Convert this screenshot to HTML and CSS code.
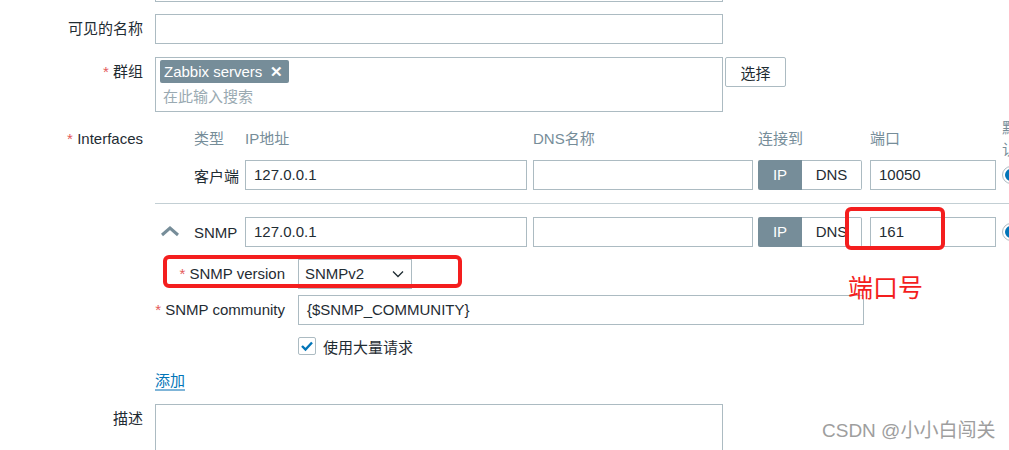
FILE: index.html
```html
<!DOCTYPE html>
<html lang="zh-CN">
<head>
<meta charset="utf-8">
<title>Host</title>
<link rel="stylesheet" href="styles.css">
</head>
<body>
<div class="form">
  <div class="row row-first">
    <div class="lbl"></div>
    <div class="field"><div class="input w-main"></div></div>
  </div>
  <div class="row row-name">
    <div class="lbl">可见的名称</div>
    <div class="field"><div class="input w-main"></div></div>
  </div>
  <div class="row row-group">
    <div class="lbl req">群组</div>
    <div class="field group-field">
      <div class="multiselect w-main">
        <span class="tag">Zabbix servers <span class="tag-x">✕</span></span>
        <div class="placeholder">在此输入搜索</div>
      </div>
      <button class="btn">选择</button>
    </div>
  </div>
  <div class="row row-ifaces">
    <div class="lbl req">Interfaces</div>
    <div class="field">
      <div class="iface-table">
        <div class="hd"></div>
        <div class="hd">类型</div>
        <div class="hd">IP地址</div>
        <div class="hd">DNS名称</div>
        <div class="hd">连接到</div>
        <div class="hd">端口</div>
        <div class="hd hd-default">默认</div>

        <div class="cell r1"></div>
        <div class="cell r1 type">客户端</div>
        <div class="cell r1"><div class="input w-ip">127.0.0.1</div></div>
        <div class="cell r1"><div class="input w-dns"></div></div>
        <div class="cell r1"><div class="toggle"><span class="t-on">IP</span><span class="t-off">DNS</span></div></div>
        <div class="cell r1"><div class="input w-port">10050</div></div>
        <div class="cell r1"><span class="radio"><span class="radio-dot"></span></span></div>

        <div class="sep"></div>

        <div class="cell r2"><svg class="chev" width="20" height="12" viewBox="0 0 20 12"><polyline points="2,10 10,3 18,10" fill="none" stroke="#768d99" stroke-width="3"/></svg></div>
        <div class="cell r2 type">SNMP</div>
        <div class="cell r2"><div class="input w-ip">127.0.0.1</div></div>
        <div class="cell r2"><div class="input w-dns"></div></div>
        <div class="cell r2"><div class="toggle"><span class="t-on">IP</span><span class="t-off">DNS</span></div></div>
        <div class="cell r2"><div class="input w-port">161</div></div>
        <div class="cell r2"><span class="radio"><span class="radio-dot"></span></span></div>

        <div class="details">
          <div class="d-row d-version">
            <div class="lbl req">SNMP version</div>
            <div class="select">SNMPv2<svg class="sel-arrow" width="12" height="8" viewBox="0 0 12 8"><polyline points="1,1.5 6,6.5 11,1.5" fill="none" stroke="#1f2c33" stroke-width="1.3"/></svg></div>
          </div>
          <div class="d-row d-community">
            <div class="lbl req">SNMP community</div>
            <div class="input w-comm">{$SNMP_COMMUNITY}</div>
          </div>
          <div class="d-row d-bulk">
            <div class="lbl"></div>
            <label class="check"><span class="box"><svg width="14" height="12" viewBox="0 0 14 12"><polyline points="2,6 5.5,9.5 12,2.5" fill="none" stroke="#0275b8" stroke-width="2.4"/></svg></span>使用大量请求</label>
          </div>
        </div>
      </div>
      <a class="add">添加</a>
    </div>
  </div>
  <div class="row row-desc">
    <div class="lbl">描述</div>
    <div class="field"><div class="textarea w-main"></div></div>
  </div>
</div>

<div class="mark mark-port"></div>
<div class="mark mark-version"></div>
<div class="note">端口号</div>
<div class="watermark">CSDN @小小白闯关</div>
</body>
</html>
```

FILE: styles.css
```css
html, body {
  margin: 0;
  padding: 0;
  overflow: hidden;
  background: #ffffff;
}
body {
  width: 1009px;
  height: 450px;
  position: relative;
  font-family: "Liberation Sans", Arial, "Noto Sans CJK SC", sans-serif;
  font-size: 15px;
  color: #1f2c33;
}
.form {
  display: flex;
  flex-direction: column;
}
.row {
  display: grid;
  grid-template-columns: 143px auto;
  column-gap: 12px;
  align-items: start;
}
.row-first { margin-top: -28px; }
.row-name { margin-top: 12px; }
.row-group { margin-top: 13px; }
.row-ifaces { margin-top: 12px; }
.row-desc { margin-top: 13px; }

.lbl {
  text-align: right;
  line-height: 30px;
  white-space: nowrap;
}
.req::before {
  content: "* ";
  color: #e45959;
}
.input, .multiselect, .textarea, .select {
  box-sizing: border-box;
  border: 1px solid #acbbc2;
  background: #fff;
  height: 30px;
  line-height: 28px;
  padding: 0 8px;
  white-space: nowrap;
}
.w-main { width: 568px; }
.w-ip { width: 282px; }
.w-dns { width: 220px; }
.w-port { width: 126px; }
.w-comm { width: 566px; }

.group-field {
  display: flex;
  align-items: flex-start;
}
.multiselect {
  height: 55px;
  padding: 2px 4px;
  line-height: normal;
}
.tag {
  display: inline-block;
  background: #768d99;
  color: #fff;
  height: 23px;
  line-height: 23px;
  padding: 0 6px 0 4px;
  border-radius: 2px;
}
.tag-x {
  font-weight: bold;
  margin-left: 3px;
}
.placeholder {
  color: #9aaab2;
  line-height: 24px;
  margin-top: 2px;
  padding-left: 3px;
}
.btn {
  margin-left: 2px;
  width: 61px;
  height: 30px;
  border: 1px solid #acbbc2;
  border-radius: 2px;
  background: #fff;
  font: inherit;
  color: #1f2c33;
  padding: 0;
}

.iface-table {
  display: grid;
  grid-template-columns: 39px 51px 288px 225px 112px 132px 40px;
  align-items: center;
}
.hd {
  color: #768d99;
  height: 30px;
  line-height: 30px;
  white-space: nowrap;
}
.hd-default {
  white-space: normal;
  width: 16px;
  line-height: 22px;
  display: flex;
  flex-direction: column;
  justify-content: center;
}
.cell {
  height: 30px;
  display: flex;
  align-items: center;
}
.r1 { margin-top: 6px; }
.type { white-space: nowrap; }
.chev { margin-left: 5px; margin-top: -3px; }
.sep {
  grid-column: 1 / -1;
  height: 1px;
  background: #c3cfd4;
  margin: 13px 0;
  width: 860px;
}
.toggle {
  display: flex;
  width: 104px;
  height: 30px;
  box-sizing: border-box;
  line-height: 30px;
}
.t-on {
  width: 44px;
  background: #768d99;
  color: #fff;
  text-align: center;
  border-radius: 2px 0 0 2px;
}
.t-off {
  flex: 1;
  box-sizing: border-box;
  border: 1px solid #acbbc2;
  border-left: none;
  line-height: 28px;
  text-align: center;
  border-radius: 0 2px 2px 0;
}
.radio {
  box-sizing: border-box;
  width: 18px;
  height: 18px;
  border: 1px solid #acbbc2;
  border-radius: 50%;
  display: flex;
  align-items: center;
  justify-content: center;
}
.radio-dot {
  width: 12px;
  height: 12px;
  border-radius: 50%;
  background: #0275b8;
}

.details {
  grid-column: 1 / -1;
  margin-top: 12px;
}
.d-row {
  display: grid;
  grid-template-columns: 130px auto;
  column-gap: 13px;
  align-items: center;
}
.d-community { margin-top: 6px; }
.d-bulk { margin-top: 11px; }
.select {
  width: 114px;
  padding: 0 6px;
  display: flex;
  justify-content: space-between;
  align-items: center;
}
.sel-arrow { margin-right: 1px; }
.check {
  display: flex;
  align-items: center;
  height: 20px;
}
.box {
  box-sizing: border-box;
  width: 18px;
  height: 18px;
  border: 1px solid #acbbc2;
  border-radius: 2px;
  display: flex;
  align-items: center;
  justify-content: center;
  margin-right: 7px;
}
.add {
  display: inline-block;
  margin-top: 16px;
  color: #0275b8;
  line-height: 17px;
  border-bottom: 2px solid #7fb5d8;
}
.textarea {
  height: 70px;
}

.mark {
  position: absolute;
  box-sizing: border-box;
  border: 4px solid #f41e1e;
  border-radius: 6px;
}
.mark-port {
  left: 845px;
  top: 207px;
  width: 100px;
  height: 43px;
}
.mark-version {
  left: 163px;
  top: 255px;
  width: 299px;
  height: 33px;
}
.note {
  position: absolute;
  left: 848px;
  top: 272px;
  font-size: 25px;
  line-height: 28px;
  color: #f41e1e;
  font-family: "Noto Sans CJK SC", sans-serif;
}
.watermark {
  position: absolute;
  left: 822px;
  top: 419px;
  font-size: 19px;
  line-height: 24px;
  color: #9e9e9e;
  text-shadow: 0 0 1px #ffffff;
  white-space: nowrap;
}
```
